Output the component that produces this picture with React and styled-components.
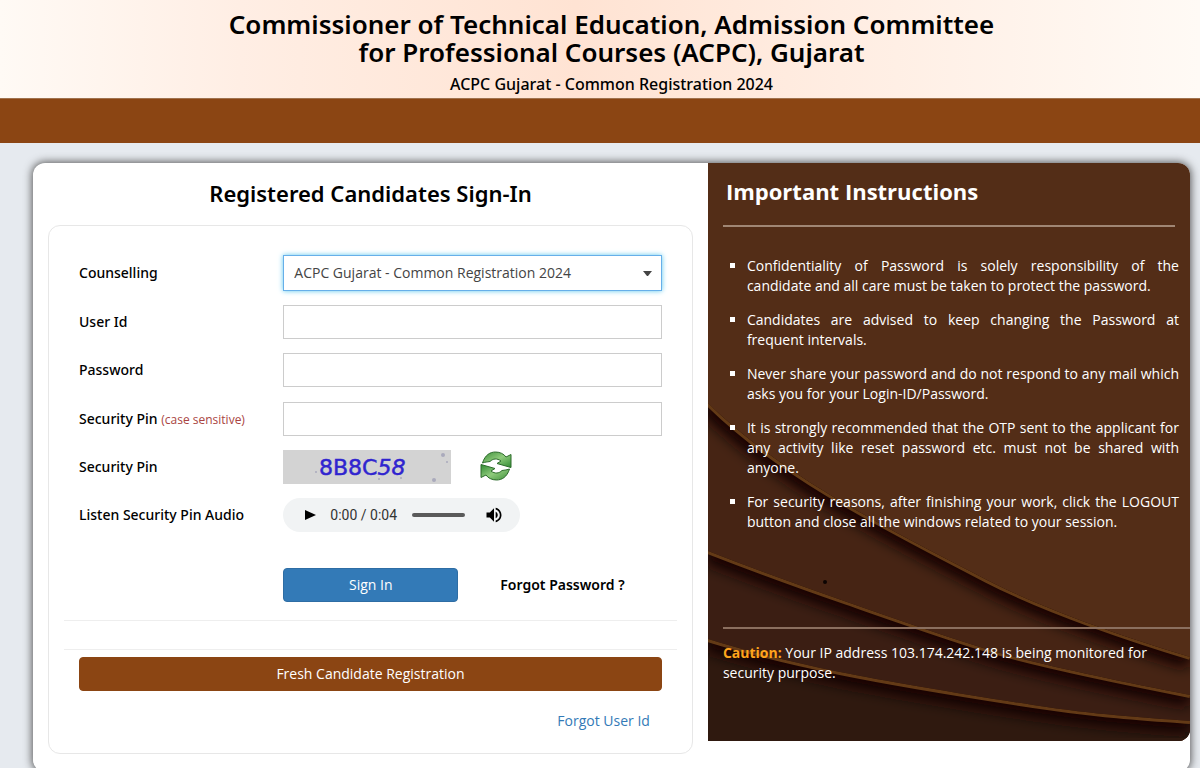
import React from 'react';
import styled, { createGlobalStyle, css } from 'styled-components';

const GlobalStyle = createGlobalStyle`
  * {
    box-sizing: border-box;
  }
  body {
    margin: 0;
    background: #e6eaef;
    color: #000;
    font-family: 'Open Sans', 'Noto Sans', sans-serif;
    font-size: 14px;
    line-height: 20px;
  }
`;

const Header = styled.header`
  padding: 10px 10px 4px 33px;
  text-align: center;
  font-family: 'Noto Sans', sans-serif;
  background: linear-gradient(90deg, #fffaf5 0%, #ffeee4 20%, #ffe3d3 48%, #ffede2 70%, #fffaf5 100%);

  h1 {
    max-width: 790px;
    margin: 0 auto;
    font-size: 26px;
    line-height: 28px;
    font-weight: 600;
  }
  p {
    margin: 8px 0 0;
    font-size: 16px;
    font-weight: 500;
  }
`;

const NavBar = styled.nav`
  height: 45px;
  background: #8b4513;
  border-top: 1px solid #a0724e;
`;

const Page = styled.main`
  padding: 20px 10px 20px 33px;
`;

const Card = styled.div`
  display: grid;
  grid-template-columns: 7fr 5fr;
  align-items: start;
  background: #fff;
  border-radius: 12px;
  box-shadow: 0 0 8px 1px #555;
`;

const SignIn = styled.section`
  padding: 14px 15px 18px;

  h2 {
    margin: 0 0 16px;
    font-family: 'Noto Sans', sans-serif;
    font-size: 22px;
    line-height: 32px;
    font-weight: 600;
    text-align: center;
  }
`;

const Form = styled.form`
  padding: 29px 15px 22px;
  border: 1px solid #e7e7e7;
  border-radius: 12px;
`;

const Row = styled.div`
  display: grid;
  grid-template-columns: 1fr 2fr;
  align-items: center;
  margin-bottom: ${(props) => props.$gap || 14}px;

  > * {
    margin: 0 15px;
  }
`;

const Label = styled.label`
  font-family: 'Noto Sans', sans-serif;
  font-weight: 500;
  white-space: nowrap;

  small {
    color: #a94442;
    font-family: 'Open Sans', sans-serif;
    font-size: 12px;
  }
`;

const field = css`
  display: block;
  width: 100%;
  height: ${(props) => (props.$active ? 36 : 34)}px;
  border: 1px solid #ccc;
  border-radius: 0;
  background: #fff;
  font-family: 'Open Sans', sans-serif;
  font-size: 14px;
  outline: none;
`;

const Input = styled.input`
  ${field}
  padding: 6px 12px;
`;

const SelectWrap = styled.div`
  position: relative;

  svg {
    position: absolute;
    right: 10px;
    top: 16px;
    pointer-events: none;
  }
`;

const Select = styled.select`
  ${field}
  appearance: none;
  padding: 0 30px 2px 10px;
  color: #444;
  border-color: #66afe9;
  box-shadow: 0 0 5px #5bc8ee;
`;

const Inline = styled.div`
  display: flex;
  align-items: center;
  gap: ${(props) => props.$gap}px;
`;

const IconButton = styled.button`
  display: flex;
  padding: 0;
  border: 0;
  background: none;
  cursor: pointer;
`;

const Player = styled.div`
  display: flex;
  align-items: center;
  width: 237px;
  height: 34px;
  padding: 0 16px 0 20px;
  border-radius: 17px;
  background: #f1f3f4;
  color: #333;
  font-family: Roboto, sans-serif;

  span {
    margin: 0 15px 0 13px;
    white-space: nowrap;
  }
  input {
    appearance: none;
    width: 53px;
    height: 4px;
    margin: 0 auto 0 0;
    border-radius: 2px;
    background: #5a5a5a;
  }
  input::-webkit-slider-thumb {
    appearance: none;
    width: 0;
    height: 0;
  }
`;

const Button = styled.button`
  width: ${(props) => props.$width || '100%'};
  height: 34px;
  padding: 0 12px 2px;
  border: 1px solid ${(props) => props.$border};
  border-radius: 4px;
  background: ${(props) => props.$color};
  color: #fff;
  font-family: 'Open Sans', sans-serif;
  font-size: 14px;
  cursor: pointer;
`;

const ForgotPassword = styled.a`
  color: #000;
  font-family: 'Noto Sans', sans-serif;
  font-weight: 600;
  text-decoration: none;
`;

const ForgotUser = styled.a`
  display: block;
  margin: 20px 27px 0 0;
  color: #337ab7;
  text-align: right;
  text-decoration: none;
`;

const Rule = styled.hr`
  margin: ${(props) => props.$margin};
  border: 0;
  border-top: ${(props) => props.$size || 1}px solid ${(props) => props.$color || '#eee'};
`;

const Fresh = styled.div`
  padding: 0 15px;
`;

const Instructions = styled.aside`
  position: relative;
  z-index: 0;
  min-height: 578px;
  overflow: hidden;
  border-radius: 0 12px 12px 0;
  background: #532d17;
  color: #fff;

  h2 {
    margin: 12px 18px 18px;
    font-size: 22px;
    line-height: 32px;
    font-weight: 700;
  }
  ul {
    margin: 0;
    padding: 29px 11px 0 39px;
    list-style: square;
    text-align: justify;
  }
  li {
    margin-bottom: 14px;
  }
`;

const Waves = styled.svg`
  position: absolute;
  inset: 0;
  z-index: -1;
  width: 100%;
  height: 100%;
`;

const Caution = styled.p`
  margin: 14px 15px 0;

  strong {
    color: #ffa41c;
    font-weight: 700;
  }
`;

const layers = [
  { id: 'top', fill: '#462414', d: 'M0 240C30 270 75 303 119 330S215 384 279 417S430 478 482 494' },
  { id: 'mid', fill: '#3b1e13', d: 'M0 388C46 406 93 423 139 439S230 471 275 485S400 516 482 532' },
  { id: 'low', fill: '#2f190f', d: 'M0 476C45 490 88 500 132 509S260 532 325 542S430 554 482 558' },
];

const rules = [
  'Confidentiality of Password is solely responsibility of the candidate\u00a0and all care must be taken to protect the password.',
  'Candidates are advised to keep changing the Password at frequent intervals.',
  'Never share your password and do not respond to any mail which asks you for your Login-ID/Password.',
  'It is strongly recommended that the OTP sent to the applicant for any activity like reset password etc. must not be shared with anyone.',
  'For security reasons, after finishing your work, click the LOGOUT button and close all the windows related to your session.',
];

const Backdrop = () => (
  <Waves viewBox="0 0 482 578" preserveAspectRatio="none" aria-hidden="true">
    <defs>
      <filter id="soft" x="-10%" y="-20%" width="120%" height="140%">
        <feGaussianBlur stdDeviation="7" />
      </filter>
      {layers.map((l) => (
        <clipPath id={l.id} key={l.id}>
          <path d={`${l.d}V578H0Z`} />
        </clipPath>
      ))}
    </defs>
    {layers.map((l) => (
      <g clipPath={`url(#${l.id})`} key={l.id}>
        <path d={`${l.d}V578H0Z`} fill={l.fill} />
        <path d={l.d} fill="none" stroke="#120500" strokeWidth="24" filter="url(#soft)" />
        <path d={l.d} fill="none" stroke="#633a16" strokeWidth="6" />
      </g>
    ))}
    <circle cx="117" cy="419" r="2" fill="#0c0402" />
  </Waves>
);

const Captcha = () => (
  <svg width="168" height="34" role="img" aria-label="Security pin image">
    <rect width="168" height="34" fill="#d3d3d3" />
    <g fill="#aaaabc">
      <circle cx="160" cy="5" r="2" />
      <circle cx="164" cy="12" r="1" />
      <circle cx="151" cy="30" r="2" />
      <circle cx="96" cy="29" r="1" />
      <circle cx="33" cy="22" r="1" />
      <circle cx="118" cy="28" r="1" />
    </g>
    <text
      x="36"
      y="25"
      fill="#3024cf"
      stroke="#3024cf"
      strokeWidth="0.5"
      fontFamily="DejaVu Sans, sans-serif"
      fontSize="22"
    >
      8B8C<tspan fontStyle="italic">58</tspan>
    </text>
  </svg>
);

const arrow = 'M1.5 12C4 4 9 1 14.5 1C19 1 23 3 25 6L30 3.5V16.5L16 12.5L20 10C16 7 12 7.5 9 10.5C6 11 4 11 1.5 12Z';

const Refresh = () => (
  <svg width="32" height="32" viewBox="-1 0 32 32" aria-hidden="true">
    <defs>
      <linearGradient id="leaf" x1="0" y1="0" x2="1" y2="1">
        <stop offset="0" stopColor="#3d8f3a" />
        <stop offset="0.5" stopColor="#8fcb7c" />
        <stop offset="1" stopColor="#2f8a31" />
      </linearGradient>
    </defs>
    <g fill="url(#leaf)" stroke="#2c6b2b" strokeWidth="1">
      <path d={arrow} />
      <path d={arrow} transform="rotate(180 15 15)" />
    </g>
  </svg>
);

const App = () => (
  <>
    <GlobalStyle />
    <Header>
      <h1>Commissioner of Technical Education, Admission Committee for Professional Courses (ACPC), Gujarat</h1>
      <p>ACPC Gujarat - Common Registration 2024</p>
    </Header>
    <NavBar />
    <Page>
      <Card>
        <SignIn>
          <h2>Registered Candidates Sign-In</h2>
          <Form onSubmit={(e) => e.preventDefault()}>
            <Row>
              <Label htmlFor="counselling">Counselling</Label>
              <SelectWrap>
                <Select id="counselling" $active>
                  <option>ACPC Gujarat - Common Registration 2024</option>
                </Select>
                <svg width="9" height="5" aria-hidden="true">
                  <path d="M0 0H9L5 5H4Z" fill="#444" />
                </svg>
              </SelectWrap>
            </Row>
            <Row>
              <Label htmlFor="user">User Id</Label>
              <div><Input id="user" type="text" /></div>
            </Row>
            <Row $gap={15}>
              <Label htmlFor="password">Password</Label>
              <div><Input id="password" type="password" /></div>
            </Row>
            <Row>
              <Label htmlFor="pin">Security Pin <small>(case sensitive)</small></Label>
              <div><Input id="pin" type="text" /></div>
            </Row>
            <Row>
              <Label as="span">Security Pin</Label>
              <Inline $gap={29}>
                <Captcha />
                <IconButton type="button" aria-label="Refresh security pin">
                  <Refresh />
                </IconButton>
              </Inline>
            </Row>
            <Row $gap={36}>
              <Label htmlFor="seek">Listen Security Pin Audio</Label>
              <Player>
                <IconButton type="button" aria-label="Play">
                  <svg width="14" height="14" viewBox="0 0 14 14">
                    <path d="M2 2L13 7L2 12Z" fill="#000" />
                  </svg>
                </IconButton>
                <span>0:00 / 0:04</span>
                <input id="seek" type="range" min="0" max="4" defaultValue="0" />
                <IconButton type="button" aria-label="Mute">
                  <svg width="20" height="20" viewBox="0 0 24 24">
                    <path
                      fill="#000"
                      d="M3 9v6h4l5 5V4L7 9H3zm13.5 3c0-1.77-1.02-3.29-2.5-4.03v8.05c1.48-.73 2.5-2.25 2.5-4.02zM14 3.23v2.06c2.89.86 5 3.54 5 6.71s-2.11 5.85-5 6.71v2.06c4.01-.91 7-4.49 7-8.77s-2.99-7.86-7-8.77z"
                    />
                  </svg>
                </IconButton>
              </Player>
            </Row>
            <Row $gap={18}>
              <span />
              <Inline $gap={42}>
                <Button type="submit" $width="175px" $color="#337ab7" $border="#2e6da4">Sign In</Button>
                <ForgotPassword href="#forgot-password">Forgot Password ?</ForgotPassword>
              </Inline>
            </Row>
            <Rule $margin="0 0 28px" />
            <Rule $margin="0 0 7px" />
            <Fresh>
              <Button type="button" $color="#8b4513" $border="#8b4513">Fresh Candidate Registration</Button>
            </Fresh>
            <ForgotUser href="#forgot-user">Forgot User Id</ForgotUser>
          </Form>
        </SignIn>
        <Instructions>
          <Backdrop />
          <h2>Important Instructions</h2>
          <Rule $size={2} $color="#a08674" $margin="0 15px" />
          <ul>
            {rules.map((r) => (
              <li key={r}>{r}</li>
            ))}
          </ul>
          <Rule $size={2} $color="#8b6f5f" $margin="95px 0 0 15px" />
          <Caution>
            <strong>Caution:</strong> Your IP address 103.174.242.148 is being monitored for security purpose.
          </Caution>
        </Instructions>
      </Card>
    </Page>
  </>
);

export default App;
